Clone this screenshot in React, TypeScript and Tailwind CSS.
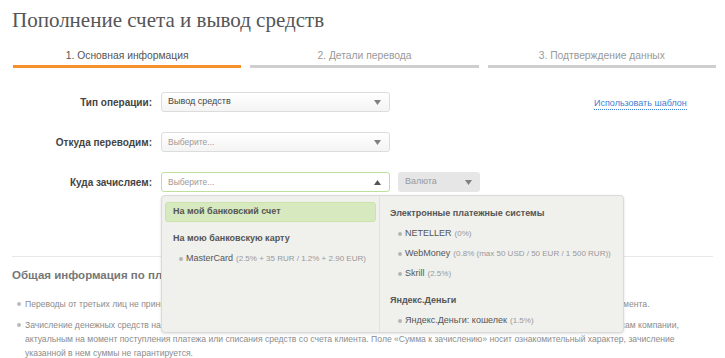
import { Fragment } from "react";

const ARROW_DOWN = (
  <svg width="7" height="5" viewBox="0 0 7 5" className="shrink-0">
    <path d="M0 0 L7 0 L3.5 5 Z" fill="#808080" />
  </svg>
);

const ARROW_UP = (
  <svg width="7" height="5" viewBox="0 0 7 5" className="shrink-0">
    <path d="M0 5 L7 5 L3.5 0 Z" fill="#555555" />
  </svg>
);

interface Item {
  name: string;
  fee: string;
}

const CARDS: Item[] = [{ name: "MasterCard", fee: "(2.5% + 35 RUR / 1.2% + 2.90 EUR)" }];

const EPS: Item[] = [
  { name: "NETELLER", fee: "(0%)" },
  { name: "WebMoney", fee: "(0.8% (max 50 USD / 50 EUR / 1 500 RUR))" },
  { name: "Skrill", fee: "(2.5%)" },
];

const YANDEX: Item[] = [{ name: "Яндекс.Деньги: кошелек", fee: "(1.5%)" }];

function Row({ label, children }: { label: string; children: React.ReactNode }) {
  return (
    <div className="flex items-center h-5">
      <div className="w-[153px] text-right text-[10px] font-bold text-[#444] pr-[1px]">{label}</div>
      <div className="ml-2 flex items-center">{children}</div>
    </div>
  );
}

function Option({ item }: { item: Item }) {
  return (
    <div className="flex items-center h-5 text-[9px] whitespace-nowrap">
      <span className="w-[4px] h-[4px] rounded-full bg-[#b5b5b5] mr-[3px]" />
      <span className="text-[#555]">{item.name}</span>
      <span className="ml-[3px] text-[8px] text-[#999]">{item.fee}</span>
    </div>
  );
}

export default function App() {
  const tabs = ["1. Основная информация", "2. Детали перевода", "3. Подтверждение данных"];

  return (
    <div className="w-[725px] h-[358px] overflow-hidden bg-white font-['Liberation_Sans',Arial,sans-serif] relative">
      {/* Заголовок */}
      <h1 className="pt-[8px] pl-3 text-[21px] leading-[24px] text-[#555] font-['Liberation_Serif',serif]">
        Пополнение счета и вывод средств
      </h1>

      {/* Шаги */}
      <div className="flex gap-[9px] pl-[13px] pr-[9px] mt-[17px]">
        {tabs.map((t, i) => (
          <div
            key={t}
            className={`flex-1 text-center text-[10.3px] leading-[14px] pb-[2px] border-b-[3px] ${
              i === 0 ? "border-[#f5922f] text-[#555]" : "border-[#cfcfcf] text-[#999]"
            }`}
          >
            {t}
          </div>
        ))}
      </div>

      {/* Форма */}
      <div className="mt-[24px] relative">
        <div className="flex flex-col gap-5">
          <div className="flex items-center">
            <Row label="Тип операции:">
              <div className="w-[229px] h-5 rounded-[3px] border border-[#dcdcdc] bg-gradient-to-b from-white to-[#f4f4f4] flex items-center justify-between pl-[6px] pr-[8px] text-[9px] text-[#444]">
                Вывод средств
                {ARROW_DOWN}
              </div>
            </Row>
            <a className="ml-[204px] mt-[3px] text-[9px] text-[#3b7fd4] border-b border-dotted border-[#3b7fd4] leading-[11px]">
              Использовать шаблон
            </a>
          </div>
          <Row label="Откуда переводим:">
            <div className="w-[229px] h-5 rounded-[3px] border border-[#dcdcdc] bg-gradient-to-b from-white to-[#f4f4f4] flex items-center justify-between pl-[6px] pr-[8px] text-[8.5px] text-[#999]">
              Выберите...
              {ARROW_DOWN}
            </div>
          </Row>
          <Row label="Куда зачисляем:">
            <div className="w-[229px] h-5 rounded-[3px] border border-[#bfe09a] bg-white flex items-center justify-between pl-[6px] pr-[8px] text-[8.5px] text-[#999]">
              Выберите...
              {ARROW_UP}
            </div>
            <div className="ml-2 w-[82px] h-5 rounded-[3px] bg-[#e6e6e6] flex items-center justify-between pl-[7px] pr-[8px] text-[9px] text-[#999]">
              Валюта
              {ARROW_DOWN}
            </div>
          </Row>
        </div>

        {/* Выпадающий список */}
        <div className="absolute left-[161px] top-[103px] w-[463px] h-[138px] z-10 flex rounded-[4px] border border-[#dadada] bg-[#f0f0ed] shadow-[0_1px_3px_rgba(0,0,0,0.12)]">
          <div className="w-[218px] border-r border-[#e2e2df] pt-[6px] pl-[3px] pr-[3px]">
            <div className="h-5 rounded-[3px] bg-[#d6e9bf] border border-[#cbe2ad] flex items-center pl-[7px] text-[9px] font-bold text-[#555]">
              На мой банковский счет
            </div>
            <div className="pl-[8px] mt-[7px] text-[9px] font-bold text-[#555] h-5 flex items-center">
              На мою банковскую карту
            </div>
            <div className="pl-[14px]">
              {CARDS.map((c) => (
                <Option key={c.name} item={c} />
              ))}
            </div>
          </div>
          <div className="flex-1 pt-[8px] pl-[10px]">
            {[
              { title: "Электронные платежные системы", items: EPS },
              { title: "Яндекс.Деньги", items: YANDEX },
            ].map((g, gi) => (
              <Fragment key={g.title}>
                <div className={`h-5 flex items-center text-[9px] font-bold text-[#555] ${gi ? "mt-[7px]" : ""}`}>
                  {g.title}
                </div>
                <div className="pl-[8px]">
                  {g.items.map((it) => (
                    <Option key={it.name} item={it} />
                  ))}
                </div>
              </Fragment>
            ))}
          </div>
        </div>
      </div>

      {/* Общая информация */}
      <div className="mx-3 mt-[64px] border-t border-[#e8e8e8] pt-[9px]">
        <h2 className="text-[11.5px] font-bold text-[#777] leading-[18px]">Общая информация по платежам</h2>
        <ul className="mt-[13px] text-[8.6px] leading-[14px] text-[#8c8c8c] flex flex-col gap-[7px]">
          <li className="flex">
            <span className="w-[4px] h-[4px] mt-[5px] rounded-full bg-[#bbb] ml-[5px] mr-[4px] shrink-0" />
            <span className="whitespace-nowrap">
              Переводы от третьих лиц не принимаются. Суммы, пришедшие от третьих лиц, возвращаются отправителю за вычетом комиссии платежного инструмента.
            </span>
          </li>
          <li className="flex">
            <span className="w-[4px] h-[4px] mt-[5px] rounded-full bg-[#bbb] ml-[5px] mr-[4px] shrink-0" />
            <span className="whitespace-nowrap">
              Зачисление денежных средств на личный торговый счет клиента производится лишь в валюте торгового счета по внутренним конвертационным курсам компании,
              <br />
              актуальным на момент поступления платежа или списания средств со счета клиента. Поле «Сумма к зачислению» носит ознакомительный характер, зачисление
              <br />
              указанной в нем суммы не гарантируется.
            </span>
          </li>
        </ul>
      </div>
    </div>
  );
}
